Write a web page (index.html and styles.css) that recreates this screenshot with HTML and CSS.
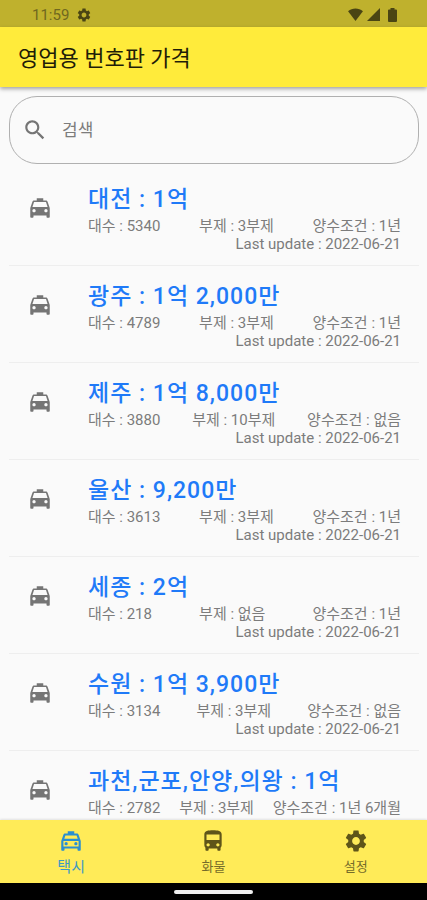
FILE: index.html
```html
<!DOCTYPE html>
<html lang="ko">
<head>
<meta charset="utf-8">
<meta name="viewport" content="width=device-width, initial-scale=1">
<title>영업용 번호판 가격</title>
<link rel="stylesheet" href="styles.css">
</head>
<body>
<svg class="sprite" aria-hidden="true">
  <symbol id="taxi" viewBox="0 0 24 24"><path d="M18.92 6.01C18.72 5.42 18.16 5 17.5 5H15V3H9v2H6.5c-.66 0-1.21.42-1.42 1.01L3 12v8c0 .55.45 1 1 1h1c.55 0 1-.45 1-1v-1h12v1c0 .55.45 1 1 1h1c.55 0 1-.45 1-1v-8l-2.08-5.99zM6.5 16c-.83 0-1.5-.67-1.5-1.5S5.67 13 6.5 13s1.5.67 1.5 1.5S7.33 16 6.5 16zm11 0c-.83 0-1.5-.67-1.5-1.5s.67-1.5 1.5-1.5 1.5.67 1.5 1.5-.67 1.5-1.5 1.5zM5 11l1.5-4.5h11L19 11H5z"/></symbol>
  <symbol id="taxi-outline" viewBox="0 0 24 24"><path d="M18.92 6.01C18.72 5.42 18.16 5 17.5 5H15V3H9v2H6.5c-.66 0-1.21.42-1.42 1.01L3 12v8c0 .55.45 1 1 1h1c.55 0 1-.45 1-1v-1h12v1c0 .55.45 1 1 1h1c.55 0 1-.45 1-1v-8l-2.08-5.99zM6.85 7h10.29l1.04 3H5.81l1.04-3zM19 17H5v-5h14v5z"/><circle cx="7.5" cy="14.5" r="1.5"/><circle cx="16.5" cy="14.5" r="1.5"/></symbol>
  <symbol id="bus" viewBox="0 0 24 24"><path d="M4 16c0 .88.39 1.67 1 2.22V20c0 .55.45 1 1 1h1c.55 0 1-.45 1-1v-1h8v1c0 .55.45 1 1 1h1c.55 0 1-.45 1-1v-1.78c.61-.55 1-1.34 1-2.22V6c0-3.5-3.58-4-8-4s-8 .5-8 4v10zm3.5 1c-.83 0-1.5-.67-1.5-1.5S6.67 14 7.5 14s1.5.67 1.5 1.5S8.33 17 7.5 17zm9 0c-.83 0-1.5-.67-1.5-1.5s.67-1.5 1.5-1.5 1.5.67 1.5 1.5-.67 1.5-1.5 1.5zm1.5-6H6V6h12v5z"/></symbol>
  <symbol id="gear" viewBox="0 0 24 24"><path d="M19.14 12.94c.04-.3.06-.61.06-.94 0-.32-.02-.64-.07-.94l2.03-1.58c.18-.14.23-.41.12-.61l-1.92-3.32c-.12-.22-.37-.29-.59-.22l-2.39.96c-.5-.38-1.03-.7-1.62-.94l-.36-2.54c-.04-.24-.24-.41-.48-.41h-3.84c-.24 0-.43.17-.47.41l-.36 2.54c-.59.24-1.13.57-1.62.94l-2.39-.96c-.22-.08-.47 0-.59.22L2.74 8.87c-.12.21-.08.47.12.61l2.03 1.58c-.05.3-.09.63-.09.94s.02.64.07.94l-2.03 1.58c-.18.14-.23.41-.12.61l1.92 3.32c.12.22.37.29.59.22l2.39-.96c.5.38 1.03.7 1.62.94l.36 2.54c.05.24.24.41.48.41h3.84c.24 0 .44-.17.47-.41l.36-2.54c.59-.24 1.13-.56 1.62-.94l2.39.96c.22.08.47 0 .59-.22l1.92-3.32c.12-.22.07-.47-.12-.61l-2.01-1.58zM12 15.6c-1.98 0-3.6-1.62-3.6-3.6s1.62-3.6 3.6-3.6 3.6 1.62 3.6 3.6-1.62 3.6-3.6 3.6z"/></symbol>
  <symbol id="search" viewBox="0 0 24 24"><path d="M15.5 14h-.79l-.28-.27C15.41 12.59 16 11.11 16 9.5 16 5.91 13.09 3 9.5 3S3 5.91 3 9.5 5.91 16 9.5 16c1.61 0 3.09-.59 4.23-1.57l.27.28v.79l5 4.99L20.49 19l-4.99-5zm-6 0C7.01 14 5 11.99 5 9.5S7.01 5 9.5 5 14 7.01 14 9.5 11.99 14 9.5 14z"/></symbol>
</svg>

<div class="app">
  <div class="status">
    <span class="clock">11:59</span>
    <svg class="status-icon" aria-hidden="true"><use href="#gear"/></svg>
    <span class="signals">
      <svg class="wifi" viewBox="0 0 16 14" aria-hidden="true"><path d="M0 3.5C4.5-.5 11.5-.5 16 3.5L8 14z"/></svg>
      <svg class="cell" viewBox="0 0 13 13" aria-hidden="true"><path d="M13 0v13H0z"/></svg>
      <svg class="battery" viewBox="0 0 9 14" aria-hidden="true"><path d="M2.5 1.5V0h4v1.5H8a1 1 0 0 1 1 1V13a1 1 0 0 1-1 1H1a1 1 0 0 1-1-1V2.5a1 1 0 0 1 1-1z"/></svg>
    </span>
  </div>
  <header class="appbar"><h1>영업용 번호판 가격</h1></header>

  <main class="content">
    <label class="search">
      <svg class="icon" role="img" aria-label="검색"><use href="#search"/></svg>
      <input type="search" placeholder="검색">
    </label>
    <ul class="list">
      <li class="row">
        <svg class="icon" aria-hidden="true"><use href="#taxi"/></svg>
        <div class="info">
          <h2>대전 : 1억</h2>
          <p class="facts"><span>대수 : 5340</span><span>부제 : 3부제</span><span>양수조건 : 1년</span></p>
          <p class="updated">Last update : 2022-06-21</p>
        </div>
      </li>
      <li class="row">
        <svg class="icon" aria-hidden="true"><use href="#taxi"/></svg>
        <div class="info">
          <h2>광주 : 1억 2,000만</h2>
          <p class="facts"><span>대수 : 4789</span><span>부제 : 3부제</span><span>양수조건 : 1년</span></p>
          <p class="updated">Last update : 2022-06-21</p>
        </div>
      </li>
      <li class="row">
        <svg class="icon" aria-hidden="true"><use href="#taxi"/></svg>
        <div class="info">
          <h2>제주 : 1억 8,000만</h2>
          <p class="facts"><span>대수 : 3880</span><span>부제 : 10부제</span><span>양수조건 : 없음</span></p>
          <p class="updated">Last update : 2022-06-21</p>
        </div>
      </li>
      <li class="row">
        <svg class="icon" aria-hidden="true"><use href="#taxi"/></svg>
        <div class="info">
          <h2>울산 : 9,200만</h2>
          <p class="facts"><span>대수 : 3613</span><span>부제 : 3부제</span><span>양수조건 : 1년</span></p>
          <p class="updated">Last update : 2022-06-21</p>
        </div>
      </li>
      <li class="row">
        <svg class="icon" aria-hidden="true"><use href="#taxi"/></svg>
        <div class="info">
          <h2>세종 : 2억</h2>
          <p class="facts"><span>대수 : 218</span><span>부제 : 없음</span><span>양수조건 : 1년</span></p>
          <p class="updated">Last update : 2022-06-21</p>
        </div>
      </li>
      <li class="row">
        <svg class="icon" aria-hidden="true"><use href="#taxi"/></svg>
        <div class="info">
          <h2>수원 : 1억 3,900만</h2>
          <p class="facts"><span>대수 : 3134</span><span>부제 : 3부제</span><span>양수조건 : 없음</span></p>
          <p class="updated">Last update : 2022-06-21</p>
        </div>
      </li>
      <li class="row">
        <svg class="icon" aria-hidden="true"><use href="#taxi"/></svg>
        <div class="info">
          <h2>과천,군포,안양,의왕 : 1억</h2>
          <p class="facts"><span>대수 : 2782</span><span>부제 : 3부제</span><span>양수조건 : 1년 6개월</span></p>
          <p class="updated">Last update : 2022-06-21</p>
        </div>
      </li>
    </ul>
  </main>

  <nav class="tabs">
    <a class="tab active" href="#taxi-list" aria-current="page"><svg class="icon" aria-hidden="true"><use href="#taxi-outline"/></svg>택시</a>
    <a class="tab" href="#cargo"><svg class="icon" aria-hidden="true"><use href="#bus"/></svg>화물</a>
    <a class="tab" href="#settings"><svg class="icon" aria-hidden="true"><use href="#gear"/></svg>설정</a>
  </nav>
  <div class="home"><span class="handle"></span></div>
</div>
</body>
</html>
```
FILE: styles.css
```css
* { box-sizing: border-box; }

body {
  margin: 0;
  font-family: Roboto, "Noto Sans CJK KR", sans-serif;
  background: #fafafa;
  color: #7c7c7c;
}

h1, h2, p, ul { margin: 0; padding: 0; }

.sprite { position: absolute; width: 0; height: 0; }

.app {
  display: flex;
  flex-direction: column;
  height: 100vh;
}

.icon {
  flex: none;
  width: 26px;
  height: 26px;
  fill: currentColor;
}

.status {
  display: flex;
  align-items: center;
  gap: 7px;
  height: 27px;
  padding: 2px 30px 0 32px;
  background: #bfb12d;
  color: #4a4513;
}

.clock { font-size: 15px; color: #70681f; }
.status-icon { width: 16px; height: 16px; fill: currentColor; }

.signals {
  display: flex;
  align-items: center;
  gap: 4px;
  margin-left: auto;
  fill: currentColor;
}
.wifi { width: 15px; height: 13px; }
.cell { width: 13px; height: 13px; }
.battery { width: 9px; height: 14px; margin-left: 4px; }

.appbar {
  display: flex;
  align-items: center;
  height: 60px;
  padding: 4px 18px 0;
  background: #ffeb3b;
  box-shadow: 0 2px 4px rgba(0, 0, 0, .35);
  z-index: 1;
}
.appbar h1 {
  font-size: 22px;
  font-weight: 400;
  line-height: 28px;
  color: #1f1d08;
}

.content {
  flex: 1;
  min-height: 0;
  overflow: hidden;
  padding: 9px 8px 0 9px;
}

.search {
  display: flex;
  align-items: center;
  gap: 14px;
  height: 68px;
  padding: 0 12px;
  border: 1px solid #b0b0b0;
  border-radius: 28px;
}
.search input {
  flex: 1;
  min-width: 0;
  padding: 0;
  border: 0;
  outline: 0;
  background: none;
  font: inherit;
  font-size: 17px;
  color: #212121;
}
.search input::placeholder { color: #7c7c7c; opacity: 1; }
.search .icon, .row .icon { color: #757575; }

.list { list-style: none; padding: 5px 0 0; }

.row {
  display: flex;
  gap: 35px;
  height: 97px;
  padding: 17px 18px 0;
  border-bottom: 1px solid #eeeeee;
}
.row .icon { margin-top: 9px; }

.info { flex: 1; min-width: 0; }
.info h2 {
  margin-bottom: 3px;
  font-size: 23px;
  font-weight: 500;
  line-height: 28px;
  letter-spacing: 1px;
  color: #1f7af8;
}
.info p { font-size: 15px; line-height: 18px; }
.facts { display: flex; justify-content: space-between; white-space: nowrap; }
.updated { text-align: right; }

.tabs {
  display: flex;
  height: 63px;
  background: #ffeb58;
  box-shadow: 0 -1px 2px rgba(0, 0, 0, .1);
  z-index: 1;
}
.tab {
  flex: 1;
  display: flex;
  flex-direction: column;
  align-items: center;
  gap: 1px;
  padding-top: 8px;
  font-size: 13px;
  line-height: 24px;
  color: #756c2a;
  text-decoration: none;
}
.tab.active { font-size: 15px; color: #3d98c4; }
.tab .icon { color: #5f5519; }
.tab.active .icon { color: #2a8fd0; }

.home {
  display: flex;
  align-items: center;
  justify-content: center;
  height: 17px;
  background: #000;
}
.handle { width: 79px; height: 4px; border-radius: 2px; background: #f0f0f0; }
```
